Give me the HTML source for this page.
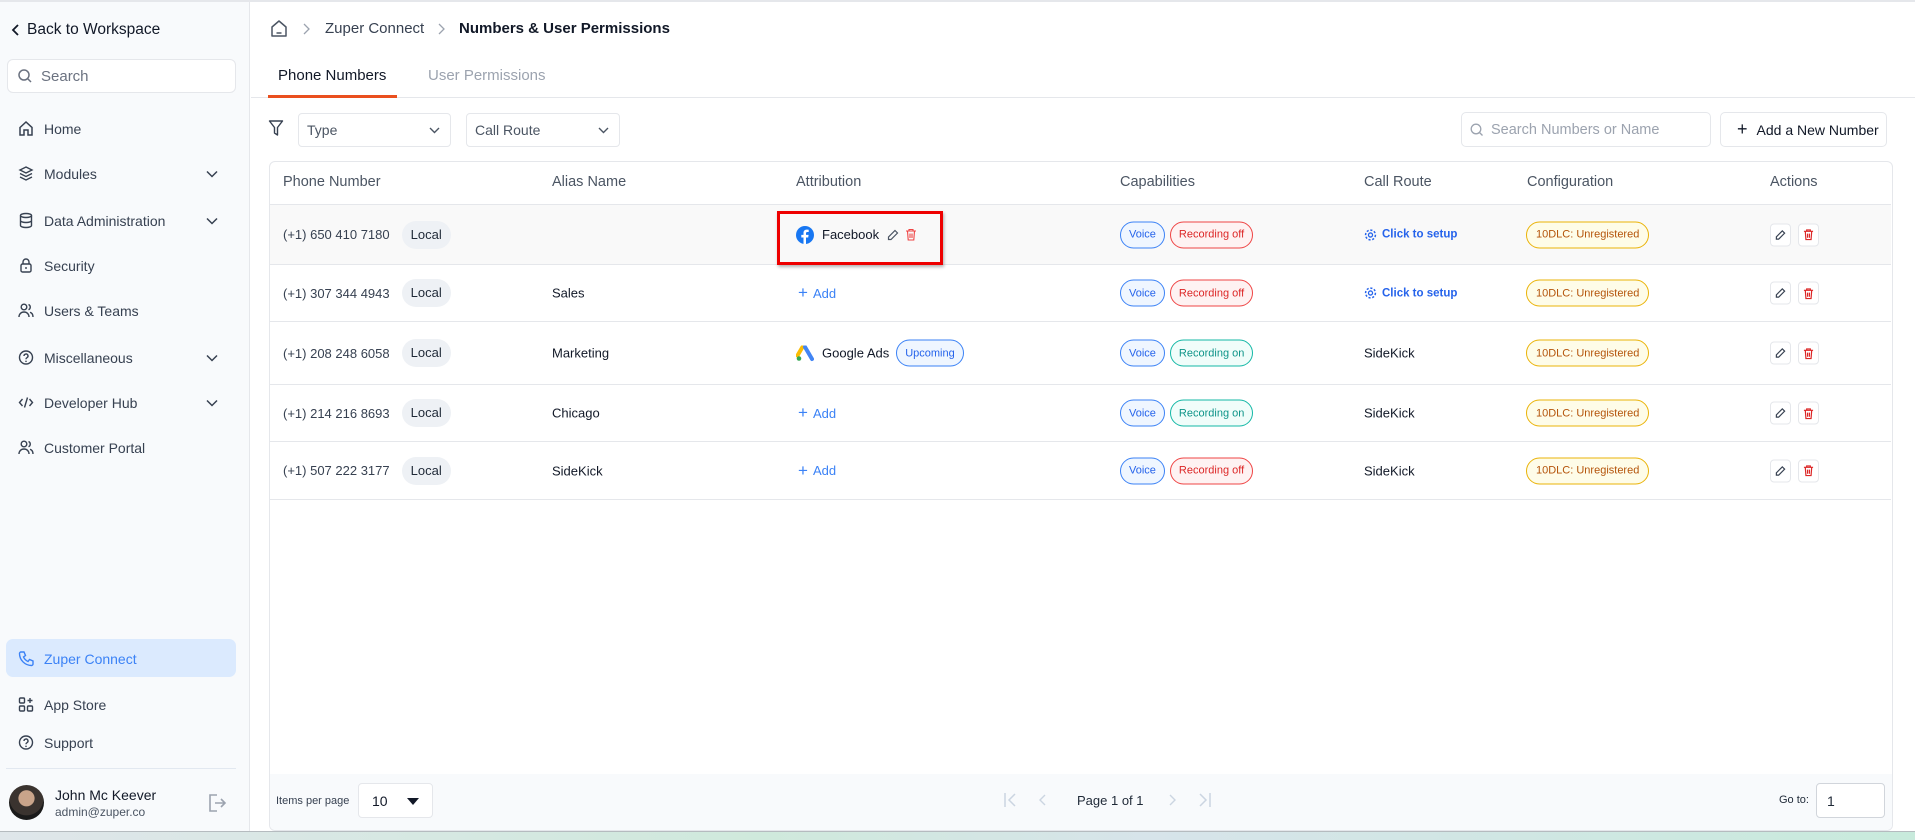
<!DOCTYPE html>
<html><head><meta charset="utf-8"><style>
*{box-sizing:border-box;margin:0;padding:0}
body{width:1915px;height:840px;position:relative;overflow:hidden;background:#fff;font-family:"Liberation Sans",Arial,sans-serif;color:#1f2937}
.a{position:absolute}
.side{left:0;top:2px;width:250px;height:829px;background:#f8fafc;border-right:1px solid #e5e7eb}
.nav{position:absolute;left:18px;display:flex;align-items:center;font-size:14px;color:#374151;width:210px}
.nav svg{margin-right:10px}
.nav .ch{position:absolute;right:0}
.th{position:absolute;top:182px;transform:translateY(-50%);font-size:14.5px;color:#4b5563}
.row{position:absolute;left:270px;width:1621px;border-bottom:1px solid #e5e7eb}
.c{position:absolute;top:50%;transform:translateY(-50%);font-size:13px;color:#111827;display:flex;align-items:center;white-space:nowrap}
.pill{display:inline-flex;align-items:center;border-radius:14px;font-size:11px;padding:0 8px;height:27px;border:1px solid}
.voice{border-color:#3b82f6;color:#2563eb;background:#eff6ff}
.off{border-color:#ef4444;color:#dc2626;background:#fef2f2;margin-left:5px}
.on{border-color:#14b8a6;color:#0d9488;background:#f0fdfa;margin-left:5px}
.dlc{border-color:#eab308;color:#b45309;background:#fefce8;padding:0 9px}
.local{background:#eef1f5;border-radius:14px;padding:0 9px;height:28px;line-height:28px;margin-left:12px;color:#1f2937}
.ab{width:21px;height:23px;border:1px solid #e5e7eb;border-radius:4px;display:inline-flex;align-items:center;justify-content:center;margin-right:7px;background:#fff}
.add{color:#3b82f6}
</style></head><body>
<div class="a" style="left:0;top:0;width:1915px;height:2px;background:#e5e7eb"></div>
<div class="a side"></div>
<div class="a" style="left:10px;top:21px;font-size:15.5px;color:#111827;display:flex;align-items:center"><svg width="12" height="14" viewBox="0 0 12 14"><path d="M8 2L3 7l5 5" stroke="#111827" stroke-width="1.8" fill="none"/></svg><span style="margin-left:5px">Back to Workspace</span></div>
<div class="a" style="left:7px;top:59px;width:229px;height:34px;background:#fff;border:1px solid #e5e7eb;border-radius:6px;display:flex;align-items:center;padding-left:9px;font-size:15px;color:#6b7280"><svg width="16" height="16" viewBox="0 0 16 16"><circle cx="7" cy="7" r="5" stroke="#6b7280" stroke-width="1.5" fill="none"/><path d="M11 11l3 3" stroke="#6b7280" stroke-width="1.5"/></svg><span style="margin-left:8px">Search</span></div>

<div class="nav" style="top:120px"><svg width="16" height="17" viewBox="0 0 16 17"><path d="M2 7.5L8 2l6 5.5V15H10v-5H6v5H2z" stroke="#374151" stroke-width="1.5" fill="none"/></svg>Home</div>
<div class="nav" style="top:165px"><svg width="16" height="17" viewBox="0 0 16 17"><path d="M8 2l6 3-6 3-6-3z M2 8.5l6 3 6-3 M2 12l6 3 6-3" stroke="#374151" stroke-width="1.4" fill="none"/></svg>Modules<svg class="ch" width="12" height="8" viewBox="0 0 12 8"><path d="M1 1.5l5 5 5-5" stroke="#374151" stroke-width="1.5" fill="none"/></svg></div>
<div class="nav" style="top:212px"><svg width="16" height="17" viewBox="0 0 16 17"><ellipse cx="8" cy="3.5" rx="5.5" ry="2" stroke="#374151" stroke-width="1.4" fill="none"/><path d="M2.5 3.5v10c0 1.1 2.5 2 5.5 2s5.5-.9 5.5-2v-10M2.5 8.5c0 1.1 2.5 2 5.5 2s5.5-.9 5.5-2" stroke="#374151" stroke-width="1.4" fill="none"/></svg>Data Administration<svg class="ch" width="12" height="8" viewBox="0 0 12 8"><path d="M1 1.5l5 5 5-5" stroke="#374151" stroke-width="1.5" fill="none"/></svg></div>
<div class="nav" style="top:257px"><svg width="16" height="17" viewBox="0 0 16 17"><rect x="3" y="7" width="10" height="8" rx="1.5" stroke="#374151" stroke-width="1.4" fill="none"/><path d="M5 7V5a3 3 0 016 0v2M8 10v2" stroke="#374151" stroke-width="1.4" fill="none"/></svg>Security</div>
<div class="nav" style="top:302px"><svg width="16" height="17" viewBox="0 0 16 17"><circle cx="6" cy="5" r="2.8" stroke="#374151" stroke-width="1.4" fill="none"/><path d="M1 15c0-3 2.2-5 5-5s5 2 5 5M10.5 2.5a2.8 2.8 0 010 5.2M12 10.3c2 .6 3 2.4 3 4.7" stroke="#374151" stroke-width="1.4" fill="none"/></svg>Users &amp; Teams</div>
<div class="nav" style="top:349px"><svg width="16" height="17" viewBox="0 0 16 17"><circle cx="8" cy="8.5" r="6.5" stroke="#374151" stroke-width="1.4" fill="none"/><path d="M6 7a2 2 0 113 1.7c-.7.4-1 .8-1 1.6" stroke="#374151" stroke-width="1.4" fill="none"/><circle cx="8" cy="12.3" r=".8" fill="#374151"/></svg>Miscellaneous<svg class="ch" width="12" height="8" viewBox="0 0 12 8"><path d="M1 1.5l5 5 5-5" stroke="#374151" stroke-width="1.5" fill="none"/></svg></div>
<div class="nav" style="top:394px"><svg width="16" height="17" viewBox="0 0 16 17"><path d="M4.5 5L1.5 8.5l3 3.5M11.5 5l3 3.5-3 3.5M9.5 3.5l-3 10" stroke="#374151" stroke-width="1.4" fill="none"/></svg>Developer Hub<svg class="ch" width="12" height="8" viewBox="0 0 12 8"><path d="M1 1.5l5 5 5-5" stroke="#374151" stroke-width="1.5" fill="none"/></svg></div>
<div class="nav" style="top:439px"><svg width="16" height="17" viewBox="0 0 16 17"><circle cx="6" cy="5" r="2.8" stroke="#374151" stroke-width="1.4" fill="none"/><path d="M1 15c0-3 2.2-5 5-5s5 2 5 5M10.5 2.5a2.8 2.8 0 010 5.2M12 10.3c2 .6 3 2.4 3 4.7" stroke="#374151" stroke-width="1.4" fill="none"/></svg>Customer Portal</div>

<div class="a" style="left:6px;top:639px;width:230px;height:38px;background:#dbeafe;border-radius:7px"></div>
<div class="nav" style="top:650px;color:#3b82f6"><svg width="16" height="17" viewBox="0 0 16 17"><path d="M3 2h3l1.5 3.5L5.5 7a9 9 0 004.5 4.5l1.5-2L15 11v3a1.5 1.5 0 01-1.5 1.5C7 15.5 1.5 10 1.5 3.5A1.5 1.5 0 013 2z" stroke="#3b82f6" stroke-width="1.4" fill="none"/></svg>Zuper Connect</div>
<div class="nav" style="top:696px"><svg width="16" height="17" viewBox="0 0 16 17"><rect x="1.5" y="2" width="5" height="5" rx="1" stroke="#374151" stroke-width="1.4" fill="none"/><rect x="1.5" y="10" width="5" height="5" rx="1" stroke="#374151" stroke-width="1.4" fill="none"/><rect x="9.5" y="10" width="5" height="5" rx="1" stroke="#374151" stroke-width="1.4" fill="none"/><path d="M12 2v5M9.5 4.5h5" stroke="#374151" stroke-width="1.4"/></svg>App Store</div>
<div class="nav" style="top:734px"><svg width="16" height="17" viewBox="0 0 16 17"><circle cx="8" cy="8.5" r="6.5" stroke="#374151" stroke-width="1.4" fill="none"/><path d="M6 7a2 2 0 113 1.7c-.7.4-1 .8-1 1.6" stroke="#374151" stroke-width="1.4" fill="none"/><circle cx="8" cy="12.3" r=".8" fill="#374151"/></svg>Support</div>
<div class="a" style="left:6px;top:768px;width:230px;height:1px;background:#e2e8f0"></div>
<div class="a" style="left:9px;top:785px;width:35px;height:35px;border-radius:50%;background:radial-gradient(circle at 50% 38%,#c9a48a 0 28%,#3a332f 30% 60%,#1a1a1a 62%)"></div>
<div class="a" style="left:55px;top:787px;font-size:14px;color:#111827">John Mc Keever</div>
<div class="a" style="left:55px;top:805px;font-size:12px;color:#4b5563">admin@zuper.co</div>
<svg class="a" style="left:207px;top:794px" width="20" height="18" viewBox="0 0 20 18"><path d="M10 1H3v16h7M8 9h10M14 5l4 4-4 4" stroke="#9ca3af" stroke-width="1.6" fill="none"/></svg>

<svg class="a" style="left:270px;top:19px" width="18" height="19" viewBox="0 0 18 19"><path d="M2 8l7-6 7 6v9H2z" stroke="#4b5563" stroke-width="1.5" fill="none" stroke-linejoin="round"/><path d="M6.5 14h5" stroke="#4b5563" stroke-width="1.5"/></svg>
<svg class="a" style="left:302px;top:23px" width="8" height="12" viewBox="0 0 8 12"><path d="M2 1l5 5-5 5" stroke="#9ca3af" stroke-width="1.3" fill="none"/></svg>
<div class="a" style="left:325px;top:20px;font-size:15px;color:#374151">Zuper Connect</div>
<svg class="a" style="left:437px;top:23px" width="8" height="12" viewBox="0 0 8 12"><path d="M2 1l5 5-5 5" stroke="#9ca3af" stroke-width="1.3" fill="none"/></svg>
<div class="a" style="left:459px;top:20px;font-size:15px;color:#111827;font-weight:bold">Numbers &amp; User Permissions</div>
<div class="a" style="left:278px;top:67px;font-size:15px;color:#111827">Phone Numbers</div>
<div class="a" style="left:428px;top:67px;font-size:15px;color:#9ca3af">User Permissions</div>
<div class="a" style="left:251px;top:97px;width:1664px;height:1px;background:#e5e7eb"></div>
<div class="a" style="left:268px;top:95px;width:129px;height:3px;background:#ea4f1e"></div>

<svg class="a" style="left:268px;top:119px" width="16" height="18" viewBox="0 0 16 18"><path d="M1.5 2h13l-5 6.5V16l-3-2V8.5z" stroke="#374151" stroke-width="1.4" fill="none" stroke-linejoin="round"/></svg>
<div class="a" style="left:298px;top:113px;width:153px;height:34px;border:1px solid #e5e7eb;border-radius:4px;font-size:14px;color:#4b5563;padding:8px 8px">Type<svg style="position:absolute;right:10px;top:13px" width="11" height="7" viewBox="0 0 11 7"><path d="M1 1l4.5 4.5L10 1" stroke="#4b5563" stroke-width="1.4" fill="none"/></svg></div>
<div class="a" style="left:466px;top:113px;width:154px;height:34px;border:1px solid #e5e7eb;border-radius:4px;font-size:14px;color:#4b5563;padding:8px 8px">Call Route<svg style="position:absolute;right:10px;top:13px" width="11" height="7" viewBox="0 0 11 7"><path d="M1 1l4.5 4.5L10 1" stroke="#4b5563" stroke-width="1.4" fill="none"/></svg></div>
<div class="a" style="left:1461px;top:112px;width:250px;height:35px;border:1px solid #e5e7eb;border-radius:5px;font-size:14.5px;color:#9ca3af;display:flex;align-items:center;padding-left:8px"><svg width="14" height="14" viewBox="0 0 14 14"><circle cx="6" cy="6" r="4.8" stroke="#9ca3af" stroke-width="1.3" fill="none"/><path d="M9.5 9.5l3 3" stroke="#9ca3af" stroke-width="1.3"/></svg><span style="margin-left:7px">Search Numbers or Name</span></div>
<div class="a" style="left:1720px;top:112px;width:167px;height:35px;border:1px solid #e5e7eb;border-radius:5px;font-size:14px;color:#111827;display:flex;align-items:center;padding-left:16px"><span style="font-size:18px;margin-right:9px">+</span>Add a New Number</div>

<div class="a" style="left:269px;top:161px;width:1624px;height:670px;border:1px solid #e5e7eb;border-radius:6px;overflow:hidden">
<div style="position:absolute;left:0;top:612px;width:100%;height:58px;background:#f8fafc"></div>
</div>
<div class="a" style="left:270px;top:204px;width:1621px;height:1px;background:#e5e7eb"></div>
<div class="th" style="left:283px">Phone Number</div>
<div class="th" style="left:552px">Alias Name</div>
<div class="th" style="left:796px">Attribution</div>
<div class="th" style="left:1120px">Capabilities</div>
<div class="th" style="left:1364px">Call Route</div>
<div class="th" style="left:1527px">Configuration</div>
<div class="th" style="left:1770px">Actions</div>

<div class="row" style="top:205px;height:60px;background:#f9f9f9">
<div class="c" style="left:13px;color:#374151">(+1) 650 410 7180<span class="local">Local</span></div>
<div class="c" style="left:526px"><svg width="18" height="18" viewBox="0 0 18 18"><circle cx="9" cy="9" r="9" fill="#1877f2"/><path d="M10 18v-6.5h2.2l.4-2.6H10V7.3c0-.7.3-1.3 1.4-1.3h1.3V3.8c-.6-.1-1.3-.2-2-.2-2 0-3.2 1.2-3.2 3.3v2H5.3v2.6h2.2V18z" fill="#fff"/></svg><span style="margin-left:8px">Facebook</span><svg style="margin-left:8px" width="12" height="12" viewBox="0 0 12 12"><path d="M8 1.5l2.5 2.5L4 10.5H1.5V8z" stroke="#4b5563" stroke-width="1.2" fill="none"/></svg><svg style="margin-left:6px" width="12" height="13" viewBox="0 0 12 13"><path d="M1 3h10M4 3V1.5h4V3M2.5 3l.7 9h5.6l.7-9M5 5.5v4.5M7 5.5v4.5" stroke="#ef4444" stroke-width="1.1" fill="none"/></svg></div>
<div class="c" style="left:850px"><span class="pill voice">Voice</span><span class="pill off">Recording off</span></div>
<div class="c" style="left:1094px;font-size:11.5px;font-weight:bold;color:#2563eb"><svg width="13" height="13" viewBox="0 0 14 14"><circle cx="7" cy="7" r="2.2" stroke="#2563eb" stroke-width="1.4" fill="none"/><circle cx="7" cy="7" r="5.3" stroke="#2563eb" stroke-width="1.6" stroke-dasharray="2.3 1.8" fill="none"/></svg><span style="margin-left:5px">Click to setup</span></div>
<div class="c" style="left:1256px"><span class="pill dlc">10DLC: Unregistered</span></div>
<div class="c" style="left:1500px"><span class="ab"><svg width="11" height="11" viewBox="0 0 12 12"><path d="M8 1.5l2.5 2.5L4 10.5H1.5V8z" stroke="#374151" stroke-width="1.3" fill="none"/></svg></span><span class="ab"><svg width="11" height="12" viewBox="0 0 12 13"><path d="M1 3h10M4 3V1.5h4V3M2.5 3l.7 9h5.6l.7-9M5 5.5v4.5M7 5.5v4.5" stroke="#dc2626" stroke-width="1.3" fill="none"/></svg></span></div>
</div>

<div class="row" style="top:265px;height:57px">
<div class="c" style="left:13px;color:#374151">(+1) 307 344 4943<span class="local">Local</span></div>
<div class="c" style="left:282px">Sales</div>
<div class="c add" style="left:528px"><span style="font-size:17px;margin-right:5px">+</span>Add</div>
<div class="c" style="left:850px"><span class="pill voice">Voice</span><span class="pill off">Recording off</span></div>
<div class="c" style="left:1094px;font-size:11.5px;font-weight:bold;color:#2563eb"><svg width="13" height="13" viewBox="0 0 14 14"><circle cx="7" cy="7" r="2.2" stroke="#2563eb" stroke-width="1.4" fill="none"/><circle cx="7" cy="7" r="5.3" stroke="#2563eb" stroke-width="1.6" stroke-dasharray="2.3 1.8" fill="none"/></svg><span style="margin-left:5px">Click to setup</span></div>
<div class="c" style="left:1256px"><span class="pill dlc">10DLC: Unregistered</span></div>
<div class="c" style="left:1500px"><span class="ab"><svg width="11" height="11" viewBox="0 0 12 12"><path d="M8 1.5l2.5 2.5L4 10.5H1.5V8z" stroke="#374151" stroke-width="1.3" fill="none"/></svg></span><span class="ab"><svg width="11" height="12" viewBox="0 0 12 13"><path d="M1 3h10M4 3V1.5h4V3M2.5 3l.7 9h5.6l.7-9M5 5.5v4.5M7 5.5v4.5" stroke="#dc2626" stroke-width="1.3" fill="none"/></svg></span></div>
</div>

<div class="row" style="top:322px;height:63px">
<div class="c" style="left:13px;color:#374151">(+1) 208 248 6058<span class="local">Local</span></div>
<div class="c" style="left:282px">Marketing</div>
<div class="c" style="left:526px"><svg width="18" height="16" viewBox="0 0 18 16"><path d="M6.5 1.5L1.5 10" stroke="#fbbc04" stroke-width="4" stroke-linecap="round"/><path d="M9 1.5l7 12" stroke="#4285f4" stroke-width="4" stroke-linecap="round"/><circle cx="3" cy="13" r="2.3" fill="#34a853"/></svg><span style="margin-left:8px">Google Ads</span><span class="pill voice" style="margin-left:7px">Upcoming</span></div>
<div class="c" style="left:850px"><span class="pill voice">Voice</span><span class="pill on">Recording on</span></div>
<div class="c" style="left:1094px">SideKick</div>
<div class="c" style="left:1256px"><span class="pill dlc">10DLC: Unregistered</span></div>
<div class="c" style="left:1500px"><span class="ab"><svg width="11" height="11" viewBox="0 0 12 12"><path d="M8 1.5l2.5 2.5L4 10.5H1.5V8z" stroke="#374151" stroke-width="1.3" fill="none"/></svg></span><span class="ab"><svg width="11" height="12" viewBox="0 0 12 13"><path d="M1 3h10M4 3V1.5h4V3M2.5 3l.7 9h5.6l.7-9M5 5.5v4.5M7 5.5v4.5" stroke="#dc2626" stroke-width="1.3" fill="none"/></svg></span></div>
</div>

<div class="row" style="top:385px;height:57px">
<div class="c" style="left:13px;color:#374151">(+1) 214 216 8693<span class="local">Local</span></div>
<div class="c" style="left:282px">Chicago</div>
<div class="c add" style="left:528px"><span style="font-size:17px;margin-right:5px">+</span>Add</div>
<div class="c" style="left:850px"><span class="pill voice">Voice</span><span class="pill on">Recording on</span></div>
<div class="c" style="left:1094px">SideKick</div>
<div class="c" style="left:1256px"><span class="pill dlc">10DLC: Unregistered</span></div>
<div class="c" style="left:1500px"><span class="ab"><svg width="11" height="11" viewBox="0 0 12 12"><path d="M8 1.5l2.5 2.5L4 10.5H1.5V8z" stroke="#374151" stroke-width="1.3" fill="none"/></svg></span><span class="ab"><svg width="11" height="12" viewBox="0 0 12 13"><path d="M1 3h10M4 3V1.5h4V3M2.5 3l.7 9h5.6l.7-9M5 5.5v4.5M7 5.5v4.5" stroke="#dc2626" stroke-width="1.3" fill="none"/></svg></span></div>
</div>

<div class="row" style="top:442px;height:58px">
<div class="c" style="left:13px;color:#374151">(+1) 507 222 3177<span class="local">Local</span></div>
<div class="c" style="left:282px">SideKick</div>
<div class="c add" style="left:528px"><span style="font-size:17px;margin-right:5px">+</span>Add</div>
<div class="c" style="left:850px"><span class="pill voice">Voice</span><span class="pill off">Recording off</span></div>
<div class="c" style="left:1094px">SideKick</div>
<div class="c" style="left:1256px"><span class="pill dlc">10DLC: Unregistered</span></div>
<div class="c" style="left:1500px"><span class="ab"><svg width="11" height="11" viewBox="0 0 12 12"><path d="M8 1.5l2.5 2.5L4 10.5H1.5V8z" stroke="#374151" stroke-width="1.3" fill="none"/></svg></span><span class="ab"><svg width="11" height="12" viewBox="0 0 12 13"><path d="M1 3h10M4 3V1.5h4V3M2.5 3l.7 9h5.6l.7-9M5 5.5v4.5M7 5.5v4.5" stroke="#dc2626" stroke-width="1.3" fill="none"/></svg></span></div>
</div>

<div class="a" style="left:777px;top:211px;width:166px;height:54px;border:3px solid #e00;box-shadow:1px 2px 3px rgba(0,0,0,.3)"></div>

<div class="a" style="left:276px;top:795px;font-size:11px;color:#374151">Items per page</div>
<div class="a" style="left:358px;top:783px;width:75px;height:35px;border:1px solid #e5e7eb;border-radius:4px;background:#fff;font-size:14px;padding:9px 13px;color:#111827">10<svg style="position:absolute;right:13px;top:14px" width="12" height="7" viewBox="0 0 12 7"><path d="M0 0h12L6 7z" fill="#111827"/></svg></div>
<svg class="a" style="left:1003px;top:791px" width="20" height="18" viewBox="0 0 20 18"><path d="M2 2v14M12 3L6 9l6 6" stroke="#cbd5e1" stroke-width="1.5" fill="none"/></svg>
<svg class="a" style="left:1037px;top:791px" width="12" height="18" viewBox="0 0 12 18"><path d="M8 4L3 9l5 5" stroke="#cbd5e1" stroke-width="1.4" fill="none"/></svg>
<div class="a" style="left:1077px;top:793px;font-size:13px;color:#1f2937">Page 1 of 1</div>
<svg class="a" style="left:1166px;top:791px" width="12" height="18" viewBox="0 0 12 18"><path d="M4 4l5 5-5 5" stroke="#cbd5e1" stroke-width="1.4" fill="none"/></svg>
<svg class="a" style="left:1192px;top:791px" width="20" height="18" viewBox="0 0 20 18"><path d="M18 2v14M8 3l6 6-6 6" stroke="#cbd5e1" stroke-width="1.5" fill="none"/></svg>
<div class="a" style="left:1779px;top:794px;font-size:11px;color:#1f2937">Go to:</div>
<div class="a" style="left:1816px;top:783px;width:69px;height:35px;border:1px solid #d1d5db;border-radius:4px;background:#fff;font-size:14px;padding:9px 10px">1</div>

<div class="a" style="left:0;top:831px;width:1915px;height:9px;background:linear-gradient(90deg,#dfe6ea,#cfe9dc 40%,#d7e4ea 60%,#c8eadc);border-top:1px solid #b5bbbf"></div>
</body></html>
